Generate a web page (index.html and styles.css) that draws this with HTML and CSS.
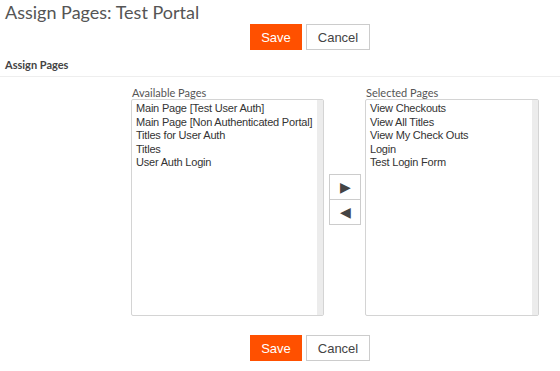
FILE: index.html
```html
<!DOCTYPE html>
<html lang="en">
<head>
  <meta charset="UTF-8">
  <title>Assign Pages: Test Portal</title>
  <link rel="stylesheet" href="styles.css">
</head>
<body>
  <h1 class="page-title">Assign Pages: Test Portal</h1>

  <div class="btn-row top">
    <button class="btn btn-save">Save</button>
    <button class="btn btn-cancel">Cancel</button>
  </div>

  <div class="section-title">Assign Pages</div>

  <div class="picker">
    <div class="list-col available">
      <div class="list-label">Available Pages</div>
      <div class="listbox">
        <ul class="list-items">
          <li>Main Page [Test User Auth]</li>
          <li>Main Page [Non Authenticated Portal]</li>
          <li>Titles for User Auth</li>
          <li>Titles</li>
          <li>User Auth Login</li>
        </ul>
        <div class="scroll-track"></div>
      </div>
    </div>

    <div class="move-btns">
      <button class="move-btn">&#9654;</button>
      <button class="move-btn">&#9664;</button>
    </div>

    <div class="list-col selected">
      <div class="list-label">Selected Pages</div>
      <div class="listbox">
        <ul class="list-items">
          <li>View Checkouts</li>
          <li>View All Titles</li>
          <li>View My Check Outs</li>
          <li>Login</li>
          <li>Test Login Form</li>
        </ul>
        <div class="scroll-track"></div>
      </div>
    </div>
  </div>

  <div class="btn-row bottom">
    <button class="btn btn-save">Save</button>
    <button class="btn btn-cancel">Cancel</button>
  </div>
</body>
</html>
```

FILE: styles.css
```css
* {
  margin: 0;
  padding: 0;
  box-sizing: border-box;
}

body {
  background: #fff;
  color: #555;
  font-family: 'Lato', 'Liberation Sans', sans-serif;
  width: 560px;
  height: 371px;
  overflow: hidden;
}

.page-title {
  font-size: 18px;
  font-weight: 400;
  color: #555;
  line-height: 24px;
  padding-left: 5px;
}

.btn-row {
  display: flex;
  gap: 4px;
  padding-left: 250px;
}

.btn-row.bottom {
  margin-top: 19px;
}

.btn {
  height: 26px;
  font-family: 'Liberation Sans', Arial, sans-serif;
  font-size: 13px;
  cursor: pointer;
}

.btn-save {
  width: 52px;
  background-color: #ff5000;
  border: 1px solid #ff5000;
  color: #fff;
}

.btn-cancel {
  width: 64px;
  background-color: #fff;
  border: 1px solid #ccc;
  color: #444;
}

.section-title {
  margin-top: 8px;
  padding: 0 0 5px 5px;
  font-size: 11px;
  font-weight: 700;
  color: #444;
  line-height: 13px;
  border-bottom: 1px solid #eee;
}

.picker {
  display: flex;
  align-items: flex-start;
  margin-top: 9px;
}

.list-col.available {
  margin-left: 131px;
  width: 193px;
}

.list-col.selected {
  margin-left: 4px;
  width: 174px;
}

.list-label {
  font-size: 11px;
  color: #555;
  line-height: 13px;
  padding-left: 1px;
}

.listbox {
  display: flex;
  height: 217px;
  border: 1px solid #d4d4d4;
  border-radius: 2px;
}

.list-items {
  flex: 1;
  list-style: none;
  padding: 2px 0 0 4px;
  font-family: 'Liberation Sans', Arial, sans-serif;
  font-size: 11px;
  letter-spacing: -0.2px;
  line-height: 13.5px;
  color: #333;
  white-space: nowrap;
  overflow: hidden;
}

.scroll-track {
  width: 6px;
  background-color: #ececec;
}

.move-btns {
  display: flex;
  flex-direction: column;
  margin: 88px 0 0 5px;
}

.move-btn {
  width: 32px;
  height: 26px;
  background: #fff;
  border: 1px solid #ccc;
  color: #444;
  font-size: 14px;
  line-height: 1;
  cursor: pointer;
}

.move-btn + .move-btn {
  margin-top: -1px;
}
```
